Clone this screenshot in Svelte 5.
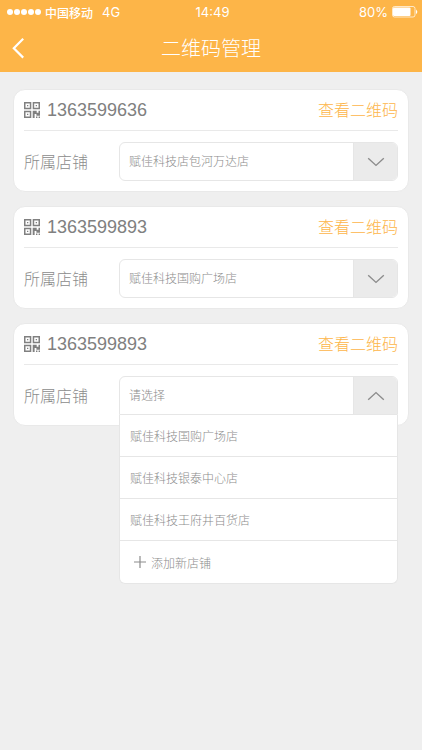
<script>
  const stores = [
    "赋佳科技国购广场店",
    "赋佳科技银泰中心店",
    "赋佳科技王府井百货店",
  ];

  let codes = [
    { number: "1363599636", store: "赋佳科技店包河万达店" },
    { number: "1363599893", store: "赋佳科技国购广场店" },
    { number: "1363599893", store: "" },
  ];

  let openIndex = 2;

  const toggle = (i) => {
    openIndex = openIndex === i ? -1 : i;
  };

  const choose = (i, store) => {
    codes[i].store = store;
    openIndex = -1;
  };

  const optionsFor = (store) =>
    !store || stores.includes(store) ? stores : [store, ...stores];
</script>

<div class="page">
  <header>
    <div class="status">
      <div class="carrier">
        <svg width="35" height="8" viewBox="0 0 35 8" fill="#fff">
          {#each [3, 10, 17, 24, 31] as cx}
            <circle {cx} cy="4" r="3" />
          {/each}
        </svg>
        <span class="operator">中国移动</span>
        <span>4G</span>
      </div>
      <span>14:49</span>
      <div class="battery">
        <span>80%</span>
        <svg width="26" height="12" viewBox="0 0 26 12">
          <rect x="0.5" y="0.5" width="22.5" height="10.5" rx="2" fill="none" stroke="#fff" stroke-opacity="0.7" />
          <rect x="1" y="1.5" width="17.5" height="8.5" rx="1" fill="#fff" />
          <path d="M24 3.4Q26.6 5.8 24 8.2Z" fill="#fff" />
        </svg>
      </div>
    </div>
    <div class="nav">
      <button class="back" aria-label="返回">
        <svg width="14" height="22" viewBox="0 0 14 22" fill="none" stroke="#fff" stroke-width="2.2">
          <path d="M12.2 1.8L2.8 11.2L12.2 20.6" />
        </svg>
      </button>
      <h1>二维码管理</h1>
    </div>
  </header>

  <main>
    {#each codes as code, i}
      <section class="card">
        <div class="top">
          <svg width="16" height="16" viewBox="0 0 16 16" fill="#808080">
            <path
              fill-rule="evenodd"
              d="M0 0h7.3v7.3H0zM1.5 1.5v4.3h4.3V1.5zM8.7 0H16v7.3H8.7zM10.2 1.5v4.3h4.3V1.5zM0 8.7h7.3V16H0zM1.5 10.2v4.3h4.3v-4.3z"
            />
            <path d="M3 3h1.3v1.3H3zM11.7 3H13v1.3h-1.3zM3 11.7h1.3V13H3z" />
            <path d="M8.7 8.7h4v2h1.8v-2H16v5h-3.6v-1.6h-1.8V16H8.7zM12 14.6h1.4V16H12zM14.6 14.6H16V16h-1.4z" />
          </svg>
          <span class="number">{code.number}</span>
          <a href="#qrcode-{i}">查看二维码</a>
        </div>
        <div class="row">
          <label for="store-{i}">所属店铺</label>
          <div class="picker">
            <div class="field" class:open={openIndex === i}>
              <select
                id="store-{i}"
                bind:value={code.store}
                on:mousedown|preventDefault={() => toggle(i)}
              >
                <option value="">请选择</option>
                {#each optionsFor(code.store) as store}
                  <option value={store}>{store}</option>
                {/each}
              </select>
              <span class="arrow">
                <svg width="18" height="10" viewBox="0 0 18 10" fill="none" stroke="#8c8c8c" stroke-width="1.4">
                  <path d="M1.2 1.2L9 8.4L16.8 1.2" />
                </svg>
              </span>
            </div>
            {#if openIndex === i}
              <div class="menu">
                {#each stores as store}
                  <button on:click={() => choose(i, store)}>{store}</button>
                {/each}
                <button class="add">
                  <svg width="12" height="12" viewBox="0 0 12 12" stroke="#8c8c8c" stroke-width="1.2">
                    <path d="M6 0V12M0 6H12" />
                  </svg>
                  添加新店铺
                </button>
              </div>
            {/if}
          </div>
        </div>
      </section>
    {/each}
  </main>
</div>

<style>
  :global(body) {
    background: #efefef;
  }

  .page {
    min-height: 100vh;
    background: #efefef;
    color: #8c8c8c;
    font-family: "Liberation Sans", "Noto Sans CJK SC", sans-serif;
    font-weight: 300;
  }

  .page * {
    box-sizing: border-box;
  }

  svg {
    display: block;
    flex: none;
  }

  button,
  select {
    margin: 0;
    padding: 0;
    border: 0;
    background: none;
    color: inherit;
    font: inherit;
    cursor: pointer;
  }

  header {
    background: #fdb548;
    color: #fff;
  }

  .status {
    display: grid;
    grid-template-columns: 1fr auto 1fr;
    align-items: center;
    height: 24px;
    padding: 0 4px 0 7px;
    font-family: Inter, "Noto Sans CJK SC", sans-serif;
    font-size: 13px;
    font-weight: 400;
  }

  .carrier,
  .battery {
    display: flex;
    align-items: center;
  }

  .operator {
    margin: 0 9px 0 3px;
    font-size: 12px;
    font-weight: 500;
  }

  .battery {
    justify-content: flex-end;
    gap: 4px;
  }

  .nav {
    display: grid;
    grid-template-columns: 48px 1fr 48px;
    align-items: center;
    height: 48px;
  }

  .back {
    display: flex;
    align-items: center;
    height: 48px;
    padding-left: 11px;
  }

  h1 {
    margin: 0;
    font-family: "Noto Sans CJK SC", sans-serif;
    font-size: 20px;
    font-weight: 300;
    line-height: 24px;
    text-align: center;
  }

  main {
    display: flex;
    flex-direction: column;
    gap: 14px;
    padding: 17px 13px;
  }

  .card {
    padding: 0 10px;
    border: 1px solid #e9e9e9;
    border-radius: 12px;
    background: #fff;
  }

  .top {
    display: flex;
    align-items: center;
    height: 41px;
    border-bottom: 1px solid #e9e9e9;
  }

  .number {
    flex: 1;
    margin-left: 7px;
    color: #808080;
    font-size: 18px;
  }

  a {
    padding-top: 2px;
    color: #fdb548;
    font-size: 16px;
    line-height: 24px;
    text-decoration: none;
  }

  .row {
    display: flex;
    align-items: center;
    padding: 11px 0 10px;
  }

  label {
    width: 95px;
    padding-top: 2px;
    font-size: 16px;
    line-height: 24px;
  }

  .picker {
    position: relative;
    flex: 1;
    font-size: 12px;
  }

  .field {
    display: flex;
    position: relative;
    height: 39px;
    border: 1px solid #e6e6e6;
    border-radius: 6px;
    background: #fff;
    overflow: hidden;
  }

  .field.open {
    border-radius: 6px 6px 0 0;
  }

  select {
    flex: 1;
    padding: 0 54px 0 9px;
    appearance: none;
    outline: none;
  }

  .arrow {
    display: flex;
    position: absolute;
    top: 0;
    right: 0;
    bottom: 0;
    align-items: center;
    justify-content: center;
    width: 44px;
    border-left: 1px solid #e6e6e6;
    background: #ebebeb;
    pointer-events: none;
  }

  .open .arrow svg {
    transform: rotate(180deg);
  }

  .menu {
    position: absolute;
    z-index: 10;
    top: 100%;
    left: 0;
    right: 0;
    border: 1px solid #e6e6e6;
    border-top: 0;
    border-radius: 0 0 6px 6px;
    background: #fff;
  }

  .menu button {
    display: flex;
    align-items: center;
    width: 100%;
    height: 42px;
    padding-left: 10px;
    border-bottom: 1px solid #e6e6e6;
  }

  .menu .add {
    gap: 5px;
    padding-left: 14px;
    border-bottom: 0;
  }
</style>
